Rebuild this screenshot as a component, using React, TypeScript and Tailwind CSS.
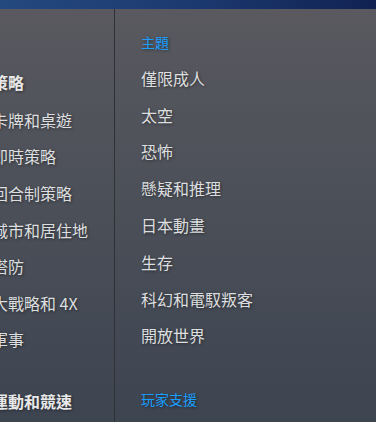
import React from 'react';

const strategy = ['卡牌和桌遊', '即時策略', '回合制策略', '城市和居住地', '塔防', '大戰略和 4X', '軍事'];
const themes = ['僅限成人', '太空', '恐怖', '懸疑和推理', '日本動畫', '生存', '科幻和電馭叛客', '開放世界'];

const shadow = '[text-shadow:1px_1px_3px_rgba(0,0,0,0.45)]';

function App() {
  return (
    <div className="h-[422px] w-full overflow-hidden flex flex-col font-['Noto_Sans_CJK_TC','Noto_Sans',sans-serif]">
      {/* top nav strip */}
      <div className="h-[9px] shrink-0 bg-gradient-to-r from-[#24497f] via-[#1c3a70] to-[#112252]" />

      {/* menu panel */}
      <div className="flex-1 flex bg-gradient-to-b from-[#59595f] to-[#3d4551]">
        {/* left column, clipped */}
        <div className="w-[114px] shrink-0 overflow-hidden">
          <div className={`-ml-2 pt-[52.5px] whitespace-nowrap ${shadow}`}>
            <div className="h-[40px] flex items-center text-[16px] font-bold text-[#e8e8e8]">策略</div>
            {strategy.map((s) => (
              <div key={s} className="h-[36.6px] flex items-center text-[16px] text-[#dcdedf]">
                {s}
              </div>
            ))}
            <div className="h-[23.6px]" />
            <div className="h-[40px] flex items-center text-[16px] font-bold text-[#e8e8e8]">運動和競速</div>
          </div>
        </div>

        {/* divider */}
        <div className="w-px shrink-0 bg-[#2f3134]" />

        {/* right column */}
        <div className={`flex-1 pl-[26px] pt-[15.5px] whitespace-nowrap ${shadow}`}>
          <div className="h-[35px] flex items-center text-[14px] text-[#1a9fff]">主題</div>
          {themes.map((t) => (
            <div key={t} className="h-[36.8px] flex items-center text-[16px] text-[#dcdedf]">
              {t}
            </div>
          ))}
          <div className="h-[28.5px]" />
          <div className="h-[35px] flex items-center text-[14px] text-[#1a9fff]">玩家支援</div>
        </div>
      </div>
    </div>
  );
}

export default App;
